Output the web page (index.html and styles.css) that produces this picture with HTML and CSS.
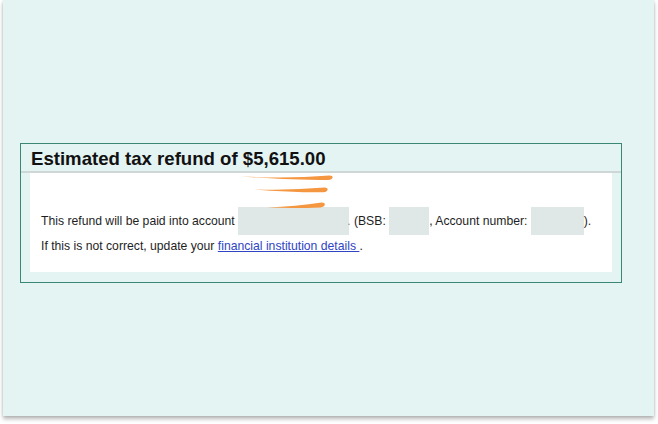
FILE: index.html
```html
<!DOCTYPE html>
<html>
<head>
<meta charset="utf-8">
<link rel="stylesheet" href="styles.css">
</head>
<body>
<div class="panel">
  <section class="card">
    <h2 class="card-title">Estimated tax refund of $5,615.00</h2>
    <div class="card-body">
      <p class="line line-account">This refund will be paid into account <span class="redact redact-name"></span><span class="frag">.</span> (BSB: <span class="redact redact-bsb"></span>, Account number: <span class="redact redact-acc"></span>).</p>
      <p class="line line-update">If this is not correct, update your <a href="#" class="link">financial institution details </a>.</p>
    </div>
  </section>
  <svg class="marks" width="651" height="416" viewBox="3 0 651 416" aria-hidden="true">
    <path d="M241 176.2 Q285 179 329.5 175.4 Q333 175.6 332.6 177.6 Q332 180 328 180 Q285 180.5 241 176.2 Z" fill="#f59640"/>
    <path d="M254 189.4 Q290 190.6 324.6 187.6 Q328 187.8 327.6 189.8 Q327 192.2 323.5 192.2 Q290 192.4 254 189.4 Z" fill="#f59640"/>
    <path d="M267 207.6 Q296 206.4 321.6 202.6 Q325 202.6 324.8 204.8 Q324.4 207.2 320.5 207.4 Q296 208.6 267 207.6 Z" fill="#f59640"/>
  </svg>
</div>
</body>
</html>
```
FILE: styles.css
```css
html, body {
  margin: 0;
  padding: 0;
  background: #ffffff;
}
body {
  width: 658px;
  height: 424px;
  overflow: hidden;
  font-family: "Liberation Sans", Arial, sans-serif;
}
.panel {
  position: relative;
  margin-left: 3px;
  width: 651px;
  height: 416px;
  background: #e4f4f3;
  box-shadow: 0 3px 4px rgba(0,0,0,0.28), 0 0 2px rgba(0,0,0,0.12);
  padding-top: 143px;
  box-sizing: border-box;
}
.card {
  margin-left: 17px;
  width: 602px;
  box-sizing: border-box;
  border: 1px solid #3a8677;
  padding-bottom: 10px;
}
.card-title {
  margin: 0;
  padding-left: 10px;
  height: 29px;
  line-height: 30px;
  font-size: 18.6px;
  font-weight: bold;
  color: #111;
  border-bottom: 2px solid #cfd6d6;
  box-sizing: border-box;
}
.card-body {
  margin: 0 9px;
  background: #ffffff;
  padding-top: 34px;
  padding-left: 11px;
  height: 99px;
  box-sizing: border-box;
}
.line {
  margin: 0;
  font-size: 12.2px;
  color: #1e1e1e;
  white-space: nowrap;
}
.line-account {
  height: 28px;
  line-height: 28px;
}
.line-update {
  padding-top: 2px;
  line-height: 18px;
}
.redact {
  display: inline-block;
  height: 28px;
  vertical-align: top;
  background: #dfe8e7;
}
.redact-name { width: 111px; }
.redact-bsb { width: 40px; }
.redact-acc { width: 53px; }
.frag {
  color: #8a9090;
  margin-left: -2px;
}
.link {
  color: #2f45c4;
  text-decoration: underline;
}
.marks {
  position: absolute;
  left: 0;
  top: 0;
  pointer-events: none;
}
```
